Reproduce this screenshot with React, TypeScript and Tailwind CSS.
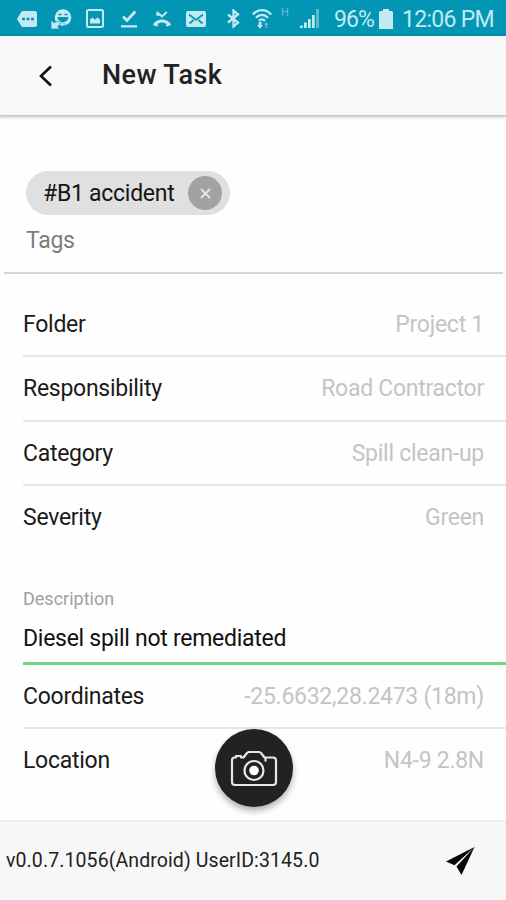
import type { ReactNode } from "react";

const fields = [
  { label: "Folder", value: "Project 1" },
  { label: "Responsibility", value: "Road Contractor" },
  { label: "Category", value: "Spill clean-up" },
  { label: "Severity", value: "Green" },
];

function StatusBar() {
  return (
    <div className="flex h-9 shrink-0 items-center bg-[#0296b4] pt-px text-[#c3eaf2]">
      <svg className="ml-[17px] shrink-0" width="20" height="16" viewBox="0 0 20 16">
        <path d="M6 0h12a2 2 0 0 1 2 2v12a2 2 0 0 1-2 2H6a2 2 0 0 1-1.6-.8L0 8 4.400.8A2 2 0 0 1 6 0z" fill="currentColor" />
        <path d="M5 6.800h3v2.400H5zM9.500 6.800h3v2.400h-3zM14 6.800h3v2.400h-3z" fill="#0c94b0" />
      </svg>
      <svg className="ml-3.5 shrink-0" width="21" height="20" viewBox="0 0 21 20">
        <circle cx="12" cy="8.500" r="8.300" fill="currentColor" />
        <path d="M6.500 8h11c-.4 3.200-2.600 5-5.500 5S6.800 11 6.500 8z" fill="#0296b4" />
        <path d="M7.500 5.500h3M13.500 5.500h3" stroke="#0296b4" strokeWidth="1.400" />
        <path d="M0 11v9h9l-2.300-2.300 2.200-2.200 2.300 2.200 2.600-2.600-2.400-2.400-2.100 1.900-2.200-2.300-4.600 1.200z" fill="currentColor" stroke="#0296b4" strokeWidth=".7" />
      </svg>
      <svg className="ml-3.5 shrink-0" width="18" height="19" viewBox="0 0 18 19">
        <rect x="1" y="1" width="16" height="17" rx="1.500" fill="none" stroke="currentColor" strokeWidth="2" />
        <path d="M4 14.500v-4l2.500-2 2.500 2.300 2.500-2.300 2.500 2v4z" fill="currentColor" />
      </svg>
      <svg className="ml-[17px] shrink-0" width="16" height="18" viewBox="0 0 16 18">
        <path d="M2 6.500 6 10.500 14.300 1.500" fill="none" stroke="currentColor" strokeWidth="2.800" />
        <path d="M0 15.200h16v2.300H0z" fill="currentColor" />
      </svg>
      <svg className="ml-4 shrink-0" width="18" height="18" viewBox="0 0 18 18">
        <path d="M4.500 2.500 9 6.500l4.800-4.500" fill="none" stroke="currentColor" strokeWidth="2" />
        <path d="M4 1.500v3.500h3" fill="none" stroke="currentColor" strokeWidth="1.300" />
        <path d="M1.200 15.500C5 9.500 13 9.500 16.800 15.500" fill="none" stroke="currentColor" strokeWidth="3.200" />
        <path d="M1.500 12.500 4.500 16M16.500 12.500 13.500 16" stroke="currentColor" strokeWidth="2.200" />
      </svg>
      <svg className="ml-[15px] shrink-0" width="20" height="16" viewBox="0 0 20 16">
        <rect width="20" height="16" rx="2" fill="currentColor" />
        <path d="M3 3.500 10 9l7-5.500M3.500 12.500 7.500 9M16.500 12.500 12.500 9" fill="none" stroke="#0296b4" strokeWidth="1.700" />
      </svg>
      <svg className="ml-[21px] shrink-0" width="13" height="19" viewBox="0 0 13 19">
        <path d="M1 5.500 11 13.500 6.500 17.500v-16L11 5.500 1 13.500" fill="none" stroke="currentColor" strokeWidth="2.300" />
      </svg>
      <svg className="ml-3 shrink-0" width="20" height="20" viewBox="0 0 20 20">
        <g fill="none" stroke="currentColor" strokeWidth="2.300">
          <path d="M.8 5.500C6-.3 14-.3 19.200 5.500" />
          <path d="M4 8.800c3.600-3.900 8.400-3.900 12 0" />
          <path d="M7 11.800c1.900-1.800 4.100-1.800 6 0" />
        </g>
        <path d="M6.800 13v3H5l3 3.800 3-3.800H9.500v-3z" fill="currentColor" />
        <path d="M13.500 19v-3h-1.500l2.300-3.300 2.300 3.300H15v3z" fill="currentColor" opacity=".5" />
      </svg>
      <span className="mb-3 ml-[9px] w-2 text-[11px] leading-none opacity-50">H</span>
      <svg className="ml-[11px] shrink-0" width="20" height="19" viewBox="0 0 20 19">
        <path d="M0 16.500h2.700V19H0zM4 13.500h2.700V19H4zM8 10h2.700v9H8zM12 6h2.700v13H12z" fill="currentColor" />
        <path d="M16 0h3v19h-3z" fill="currentColor" opacity=".45" />
      </svg>
      <span className="ml-3.5 w-[42px] whitespace-nowrap pt-px text-[23px] leading-none tracking-[-0.9px]">96%</span>
      <svg className="ml-[3px] shrink-0" width="14" height="20" viewBox="0 0 14 20">
        <path d="M4 0h6v2h2.500A1.500 1.500 0 0 1 14 3.500V20H0V3.500A1.500 1.500 0 0 1 1.500 2H4z" fill="currentColor" />
      </svg>
      <span className="ml-[9px] whitespace-nowrap pt-px text-[23px] leading-none tracking-[-0.7px]">12:06 PM</span>
    </div>
  );
}

function Header() {
  return (
    <header className="z-10 flex h-[79px] shrink-0 items-center bg-[#f8f8f8] shadow-[0_1px_3px_1px_rgba(0,0,0,0.25)]">
      <svg className="ml-[38px]" width="15" height="22" viewBox="0 0 15 22">
        <path d="M13 1.500 3 11l10 9.500" fill="none" stroke="#111" strokeWidth="2.600" />
      </svg>
      <h1 className="ml-[49px] text-[27px] leading-none font-medium tracking-[0.4px] text-[#222]">New Task</h1>
    </header>
  );
}

function Tags() {
  return (
    <section className="mr-[3px] ml-1 h-[159px] shrink-0 border-b-2 border-[#d5d5d5] pt-14 pl-[22px]">
      <div className="flex h-[44px] w-[204px] items-center rounded-full bg-[#e0e0e0] pl-[17px]">
        <span className="w-[145px] whitespace-nowrap text-[23px] leading-none tracking-[-0.27px] text-[#151515]">
          #B1 accident
        </span>
        <span className="flex size-[34px] items-center justify-center rounded-full bg-[#a2a2a2]">
          <svg width="11" height="11" viewBox="0 0 11 11">
            <path d="m1 1 9 9M10 1l-9 9" stroke="#e4e4e4" strokeWidth="2" />
          </svg>
        </span>
      </div>
      <p className="mt-3.5 text-[23px] leading-[23px] tracking-[-0.27px] text-[#7c7c7c]">Tags</p>
    </section>
  );
}

function Row({ label, children, divider = true }: { label: string; children: ReactNode; divider?: boolean }) {
  return (
    <div
      className={`flex h-[64.3px] shrink-0 items-center justify-between border-b-2 pt-px pr-[22px] text-[23px] leading-[23px] tracking-[-0.27px] ${
        divider ? "border-[#e6e6e6]" : "border-transparent"
      }`}
    >
      <span className="text-[#1a1a1a]">{label}</span>
      <span className="text-[#c4c4c4]">{children}</span>
    </div>
  );
}

function CameraButton() {
  return (
    <button
      aria-label="Take photo"
      className="absolute top-[729px] left-[215px] flex size-[78px] items-center justify-center rounded-full bg-[#222] pt-0.5 shadow-[0_4px_6px_rgba(0,0,0,0.3)]"
    >
      <svg width="48" height="38" viewBox="0 0 48 38" fill="none" stroke="#e8e8e8" strokeWidth="2.200">
        <path d="M4.500 7.500H6V6h5v1.500h2.500L17 3q.6-1 2-1h10q1.400 0 2 1l3.500 4.500H43q3 0 3 3V32q0 3-3 3H5q-3 0-3-3V10.500q0-3 2.500-3z" strokeLinejoin="round" />
        <circle cx="24" cy="20.500" r="9.500" />
        <circle cx="24" cy="20.500" r="4.800" fill="#fff" stroke="none" />
        <path d="M35.500 8v3.500" />
      </svg>
    </button>
  );
}

export default function App() {
  return (
    <div className="relative flex h-[900px] w-[506px] flex-col overflow-hidden bg-[#fefefe] font-['Roboto',sans-serif]">
      <StatusBar />
      <Header />
      <Tags />

      <main className="flex flex-1 flex-col pt-[19px] pl-[23px]">
        {fields.map((field, i) => (
          <Row key={field.label} label={field.label} divider={i < fields.length - 1}>
            {field.value}
          </Row>
        ))}

        <div className="mt-[38.5px] h-[76px] shrink-0 border-b-[3px] border-[#6bd786]">
          <p className="text-[18px] leading-[20px] text-[#a0a0a0]">Description</p>
          <p className="mt-[18px] text-[23px] leading-6 tracking-[-0.27px] text-[#111]">Diesel spill not remediated</p>
        </div>

        <Row label="Coordinates">-25.6632,28.2473 (18m)</Row>
        <Row label="Location" divider={false}>N4-9 2.8N</Row>
      </main>

      <footer className="flex h-20 shrink-0 items-center border-t-2 border-[#eeeeee] bg-[#f7f7f7] pl-1.5">
        <span className="w-[440px] whitespace-nowrap pb-px text-[19.5px] leading-5 tracking-[0.1px] text-[#222]">
          v0.0.7.1056(Android) UserID:3145.0
        </span>
        <svg width="29" height="28" viewBox="0 0 29 28">
          <path d="M28.500 0 0 14.500l8.500 3.800zM28.500 0 10.500 19.500l5 8.500z" fill="#080808" />
        </svg>
      </footer>

      <CameraButton />
    </div>
  );
}
